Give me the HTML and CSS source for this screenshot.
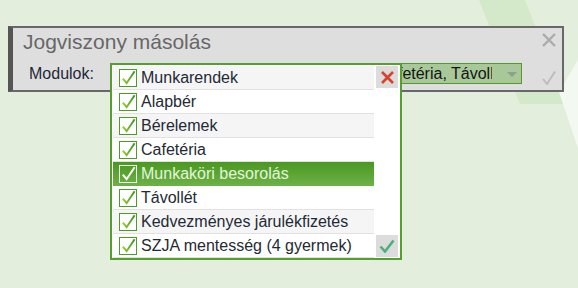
FILE: index.html
```html
<!DOCTYPE html>
<html lang="hu">
<head>
<meta charset="utf-8">
<title>Jogviszony másolás</title>
<link rel="stylesheet" href="styles.css">
</head>
<body>
<svg class="bg" width="578" height="288" viewBox="0 0 578 288" aria-hidden="true">
  <polygon points="479,0 525,0 566,104 520,104" fill="#d4e8ca"/>
  <polygon points="559,92 578,60 578,148" fill="#f3f9f0"/>
</svg>
<div class="dialog">
  <div class="title-row">
    <div class="title">Jogviszony másolás</div>
    <svg class="icon-close" width="14" height="14" viewBox="0 0 14 14"><path d="M1 1L13 13M13 1L1 13" stroke="#ababab" stroke-width="2.4" fill="none"/></svg>
  </div>
  <div class="form-row">
    <div class="label">Modulok:</div>
    <div class="field">
      <span class="field-text">Munkarendek, Alapbér, Bérelemek, Cafetéria, Távollét, Munkaköri besorolás</span>
      <span class="field-arrow"><span class="tri"></span></span>
      <div class="panel">
        <div class="list">
          <div class="row alt"><span class="cb"><svg width="15" height="15" viewBox="0 0 15 15"><path d="M1.8 8.6L5.6 13.2L13.6 1.2" stroke="url(#g)" stroke-width="2" fill="none"/></svg></span>Munkarendek</div>
          <div class="row"><span class="cb"><svg width="15" height="15" viewBox="0 0 15 15"><path d="M1.8 8.6L5.6 13.2L13.6 1.2" stroke="url(#g)" stroke-width="2" fill="none"/></svg></span>Alapbér</div>
          <div class="row alt"><span class="cb"><svg width="15" height="15" viewBox="0 0 15 15"><path d="M1.8 8.6L5.6 13.2L13.6 1.2" stroke="url(#g)" stroke-width="2" fill="none"/></svg></span>Bérelemek</div>
          <div class="row"><span class="cb"><svg width="15" height="15" viewBox="0 0 15 15"><path d="M1.8 8.6L5.6 13.2L13.6 1.2" stroke="url(#g)" stroke-width="2" fill="none"/></svg></span>Cafetéria</div>
          <div class="row sel"><span class="cb"><svg width="15" height="15" viewBox="0 0 15 15"><path d="M1.8 8.6L5.6 13.2L13.6 1.2" stroke="#ffffff" stroke-width="2" fill="none"/></svg></span>Munkaköri besorolás</div>
          <div class="row"><span class="cb"><svg width="15" height="15" viewBox="0 0 15 15"><path d="M1.8 8.6L5.6 13.2L13.6 1.2" stroke="url(#g)" stroke-width="2" fill="none"/></svg></span>Távollét</div>
          <div class="row alt"><span class="cb"><svg width="15" height="15" viewBox="0 0 15 15"><path d="M1.8 8.6L5.6 13.2L13.6 1.2" stroke="url(#g)" stroke-width="2" fill="none"/></svg></span>Kedvezményes járulékfizetés</div>
          <div class="row"><span class="cb"><svg width="15" height="15" viewBox="0 0 15 15"><path d="M1.8 8.6L5.6 13.2L13.6 1.2" stroke="url(#g)" stroke-width="2" fill="none"/></svg></span>SZJA mentesség (4 gyermek)</div>
        </div>
        <div class="side">
          <div class="btn"><svg width="13" height="13" viewBox="0 0 13 13"><path d="M1 1L12 12M12 1L1 12" stroke="#d9432e" stroke-width="2.6" fill="none"/></svg></div>
          <div class="btn"><svg width="16" height="14" viewBox="0 0 16 14"><path d="M1.5 7.5L6 12.5L14.5 1.5" stroke="#4daf7b" stroke-width="2.6" fill="none"/></svg></div>
        </div>
      </div>
    </div>
    <svg class="icon-ok" width="14" height="15" viewBox="0 0 14 15"><path d="M1 9L5 14L13 1.5" stroke="#bdbdbd" stroke-width="2" fill="none"/></svg>
  </div>
</div>
<svg width="0" height="0" class="defs" aria-hidden="true">
  <defs>
    <linearGradient id="g" x1="0" y1="0" x2="1" y2="0">
      <stop offset="0" stop-color="#9fcc3a"/>
      <stop offset="1" stop-color="#3c971f"/>
    </linearGradient>
  </defs>
</svg>
</body>
</html>
```
FILE: styles.css
```css
html, body {
  margin: 0;
}
body {
  width: 578px;
  height: 288px;
  box-sizing: border-box;
  padding: 26px 0 0 8px;
  background: #e3efdc;
  position: relative;
  overflow: hidden;
  font-family: "Liberation Sans", Arial, sans-serif;
}
.bg {
  position: absolute;
  left: 0;
  top: 0;
}
.defs {
  position: absolute;
}
.dialog {
  position: relative;
  z-index: 1;
  width: 556px;
  box-sizing: border-box;
  background: #dedede;
  border: 2px solid #686868;
  border-left: 5px solid #555555;
  padding: 2px 6px 6px 10px;
}
.title-row {
  display: flex;
  justify-content: space-between;
  align-items: flex-start;
  height: 24px;
}
.title {
  font-size: 21px;
  line-height: 24px;
  color: #676767;
}
.icon-close {
  margin-top: 3px;
}
.form-row {
  margin-top: 9px;
  display: flex;
  align-items: flex-start;
  height: 21px;
}
.label {
  width: 87px;
  margin-left: 6px;
  font-size: 16px;
  line-height: 21px;
  color: #1e2838;
}
.field {
  position: relative;
  width: 406px;
  height: 21px;
  box-sizing: border-box;
  border: 1px solid #4f9c26;
  background: #a8c899;
  display: flex;
}
.field-text {
  flex: 1 1 auto;
  min-width: 0;
  overflow: hidden;
  white-space: nowrap;
  padding-left: 7px;
  font-size: 16px;
  line-height: 19px;
  color: #151515;
}
.field-arrow {
  flex: 0 0 29px;
  box-sizing: border-box;
  padding: 8px 0 0 15px;
}
.tri {
  display: block;
  width: 0;
  height: 0;
  border-left: 5px solid transparent;
  border-right: 5px solid transparent;
  border-top: 5px solid #8f9e8a;
}
.icon-ok {
  margin-left: auto;
  margin-top: 7px;
}
.panel {
  position: absolute;
  left: -7px;
  top: -1px;
  width: 292px;
  height: 197px;
  box-sizing: border-box;
  border: 2px solid #55a02c;
  background: #ffffff;
  padding: 1px 2px 0 1px;
  display: flex;
}
.list {
  width: 261px;
  display: flex;
  flex-direction: column;
}
.row {
  height: 24px;
  box-sizing: border-box;
  border-bottom: 1px solid #e1e1e1;
  padding-left: 6px;
  display: flex;
  align-items: center;
  font-size: 16px;
  line-height: 23px;
  color: #232a35;
  white-space: nowrap;
}
.row.alt {
  background: #f5f5f5;
}
.row.sel {
  background: linear-gradient(#4a9821, #6cb046);
  color: #e4f4dc;
  border-bottom-color: #6cb046;
}
.cb {
  width: 18px;
  height: 18px;
  box-sizing: border-box;
  border: 1.5px solid #4f9b2a;
  background: #ffffff;
  margin-right: 4px;
  display: flex;
  align-items: center;
  justify-content: center;
}
.row.sel .cb {
  background: transparent;
  border-color: #eef7ea;
}
.side {
  width: 22px;
  margin-left: 2px;
  padding-bottom: 1px;
  display: flex;
  flex-direction: column;
  justify-content: space-between;
}
.btn {
  width: 22px;
  height: 22px;
  background: #dcdcdc;
  display: flex;
  align-items: center;
  justify-content: center;
}
```
